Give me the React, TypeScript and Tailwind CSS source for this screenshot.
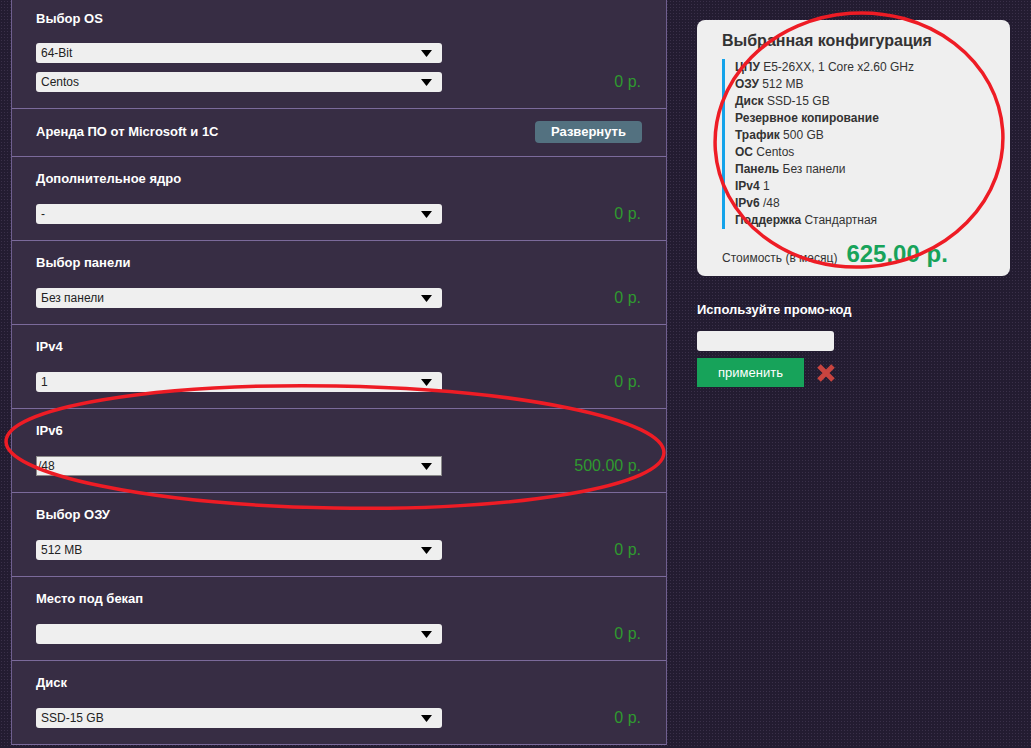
import React from 'react';

type Row = { title: string; selects: string[]; price: string; focused?: boolean };

const rowsTop: Row = { title: 'Выбор OS', selects: ['64-Bit', 'Centos'], price: '0 р.' };

const rows: Row[] = [
    { title: 'Дополнительное ядро', selects: ['-'], price: '0 р.' },
    { title: 'Выбор панели', selects: ['Без панели'], price: '0 р.' },
    { title: 'IPv4', selects: ['1'], price: '0 р.' },
    { title: 'IPv6', selects: ['/48'], price: '500.00 р.', focused: true },
    { title: 'Выбор ОЗУ', selects: ['512 MB'], price: '0 р.' },
    { title: 'Место под бекап', selects: [''], price: '0 р.' },
    { title: 'Диск', selects: ['SSD-15 GB'], price: '0 р.' },
];

const config: [string, string][] = [
    ['ЦПУ', 'E5-26XX, 1 Core x2.60 GHz'],
    ['ОЗУ', '512 MB'],
    ['Диск', 'SSD-15 GB'],
    ['Резервное копирование', ''],
    ['Трафик', '500 GB'],
    ['ОС', 'Centos'],
    ['Панель', 'Без панели'],
    ['IPv4', '1'],
    ['IPv6', '/48'],
    ['Поддержка', 'Стандартная'],
];

const Select = ({ value, focused }: { value: string; focused?: boolean }) => (
    <div
        className={
            focused
                ? 'w-[406px] h-[20px] bg-[#efefef] border border-[#8a8a8a] flex items-center justify-between pl-[1px] pr-[9px] text-[12px] text-[#222]'
                : 'w-[406px] h-[20px] bg-[#efefef] rounded-[3px] flex items-center justify-between pl-[5px] pr-[10px] text-[12px] text-[#222]'
        }
    >
        <span>{value}</span>
        <svg width="11" height="7" viewBox="0 0 11 7">
            <path d="M0 0 H11 L5.5 7 Z" fill="#000" />
        </svg>
    </div>
);

const Price = ({ value }: { value: string }) => (
    <span className="text-[16px] text-[#2f9a2f] leading-none">{value}</span>
);

export default function App() {
    return (
        <div
            className="relative w-[1031px] h-[748px] overflow-hidden flex bg-[#231c31] bg-[radial-gradient(#3a3049_1px,transparent_1px)] bg-[size:3px_3px]"
            style={{ fontFamily: '"Liberation Sans", Arial, sans-serif' }}
        >
            <div className="ml-[11px] w-[656px] bg-[#372d44] border-x border-[#6f5f8f] self-start">
                <div className="pl-[24px] pr-[25px] pt-[11px] pb-[16px] border-b border-[#7b6a9b]">
                    <div className="text-[13px] font-bold text-white leading-[15px]">{rowsTop.title}</div>
                    <div className="mt-[17px] flex items-end justify-between">
                        <div className="flex flex-col gap-[9px]">
                            {rowsTop.selects.map((s) => (
                                <Select key={s} value={s} />
                            ))}
                        </div>
                        <div className="h-[20px] flex items-center">
                            <Price value={rowsTop.price} />
                        </div>
                    </div>
                </div>

                <div className="pl-[24px] pr-[24px] pt-[12px] pb-[13px] border-b border-[#7b6a9b] flex items-center justify-between">
                    <span className="text-[13px] font-bold text-white">Аренда ПО от Microsoft и 1С</span>
                    <button className="w-[107px] h-[22px] rounded-[4px] bg-[#537180] text-white text-[13px] font-bold">
                        Развернуть
                    </button>
                </div>

                {rows.map((r) => (
                    <div key={r.title} className="pl-[24px] pr-[25px] pt-[14px] pb-[16px] border-b border-[#7b6a9b]">
                        <div className="text-[13px] font-bold text-white leading-[15px]">{r.title}</div>
                        <div className="mt-[18px] flex items-center justify-between">
                            <Select value={r.selects[0]} focused={r.focused} />
                            <Price value={r.price} />
                        </div>
                    </div>
                ))}
            </div>

            <div className="ml-[30px] mt-[20px] w-[313px] flex flex-col">
                <div className="bg-[#efefef] rounded-[8px] h-[256px] pl-[25px] pr-[12px] pt-[11px]">
                    <div className="text-[16px] font-bold text-[#333] leading-[20px]">Выбранная конфигурация</div>
                    <div className="mt-[8px] border-l-[3px] border-[#14a3ea] pl-[10px] text-[12px] text-[#333]">
                        {config.map(([k, v]) => (
                            <div key={k} className="leading-[17px]">
                                <span className="font-bold">{k}</span>
                                {v && ' ' + v}
                            </div>
                        ))}
                    </div>
                    <div className="mt-[12px] flex items-center">
                        <span className="text-[12px] text-[#333] mt-[8px]">Стоимость (в месяц)</span>
                        <span className="ml-[9px] text-[24px] font-bold text-[#17a35a] leading-none">625.00 р.</span>
                    </div>
                </div>

                <div className="mt-[26px] text-[13px] font-bold text-white leading-[15px]">Используйте промо-код</div>
                <div className="mt-[14px] w-[137px] h-[20px] rounded-[3px] bg-[#efefef]"></div>
                <div className="mt-[7px] flex items-center gap-[12px]">
                    <button className="w-[107px] h-[29px] bg-[#17a35a] text-white text-[13px]">применить</button>
                    <svg width="20" height="20" viewBox="0 0 20 20">
                        <path d="M3 3 L17 17 M17 3 L3 17" stroke="#c8443f" strokeWidth="5" strokeLinecap="butt" />
                    </svg>
                </div>
            </div>

            {/* red hand-drawn marks over the screenshot */}
            <svg className="absolute inset-0 pointer-events-none" width="1031" height="748" viewBox="0 0 1031 748">
                <ellipse cx="859" cy="140" rx="144" ry="127" fill="none" stroke="#ee1c25" strokeWidth="3.5" transform="rotate(-4 859 140)" />
                <ellipse cx="335" cy="447" rx="329" ry="61" fill="none" stroke="#ee1c25" strokeWidth="3.5" transform="rotate(1 335 447)" />
            </svg>
        </div>
    );
}
